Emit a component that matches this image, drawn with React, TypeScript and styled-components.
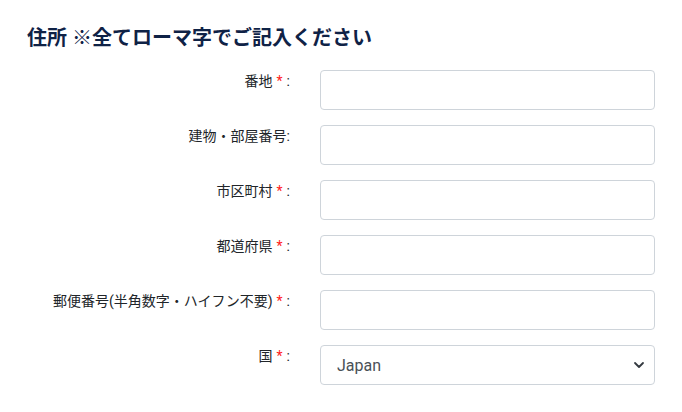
import React from "react";
import styled, {createGlobalStyle} from "styled-components";

const GlobalStyle = createGlobalStyle`
  html, body {
    margin: 0;
    padding: 0;
    background: #ffffff;
  }
  body {
    font-family: Roboto, "Noto Sans CJK JP", sans-serif;
    color: #212529;
  }
`;

const S = {
    Page: styled.div`
      width: 682px;
      height: 412px;
      box-sizing: border-box;
      padding: 23px 27px 0 27px;
      overflow: hidden;
    `,
    Heading: styled.h2`
      margin: 0 0 17px 0;
      font-family: Roboto, "Noto Sans CJK JP", sans-serif;
      font-size: 20px;
      line-height: 30px;
      font-weight: 700;
      color: #0f2246;
    `,
    Form: styled.div`
      display: grid;
      grid-template-columns: 263px 335px;
      column-gap: 30px;
      row-gap: 15px;
    `,
    Label: styled.label`
      display: block;
      text-align: right;
      padding-top: 1px;
      font-family: Roboto, "Noto Sans CJK JP", sans-serif;
      font-size: 14px;
      line-height: 21px;
      color: #212529;
      white-space: nowrap;
    `,
    Required: styled.span`
      color: #ff2020;
      margin: 0 4px 0 4px;
    `,
    Input: styled.input`
      display: block;
      width: 100%;
      height: 40px;
      box-sizing: border-box;
      margin: 0;
      padding: 6px 16px;
      border: 1px solid #ced4da;
      border-radius: 4px;
      background: #fff;
      font-family: Roboto, sans-serif;
      font-size: 16px;
      color: #495057;
      outline: none;
    `,
    SelectWrap: styled.div`
      position: relative;
      width: 100%;
      height: 40px;
    `,
    Select: styled.select`
      display: block;
      width: 100%;
      height: 40px;
      box-sizing: border-box;
      margin: 0;
      padding: 0 32px 0 16px;
      border: 1px solid #ced4da;
      border-radius: 4px;
      background: #fff;
      font-family: Roboto, sans-serif;
      font-size: 16px;
      color: #495057;
      appearance: none;
      -webkit-appearance: none;
      outline: none;
    `,
    Chevron: styled.svg`
      position: absolute;
      right: 10px;
      top: 14px;
      pointer-events: none;
    `,
}

interface FieldProps {
    label: string;
    required?: boolean;
}

const Field: React.FC<FieldProps> = ({label, required}) => (
    <>
        <S.Label>
            {label}
            {required ? <><S.Required>*</S.Required>:</> : ":"}
        </S.Label>
        <S.Input type="text"/>
    </>
)

const App: React.FC = () => {
    return (
        <S.Page>
            <GlobalStyle/>
            <S.Heading>住所 ※全てローマ字でご記入ください</S.Heading>
            <S.Form>
                <Field label="番地" required/>
                <Field label="建物・部屋番号"/>
                <Field label="市区町村" required/>
                <Field label="都道府県" required/>
                <Field label="郵便番号(半角数字・ハイフン不要)" required/>
                <S.Label>
                    国<S.Required>*</S.Required>:
                </S.Label>
                <S.SelectWrap>
                    <S.Select defaultValue="JP">
                        <option value="JP">Japan</option>
                    </S.Select>
                    <S.Chevron width="12" height="12" viewBox="0 0 12 12">
                        <path d="M2 4l4 4 4-4" fill="none" stroke="#343a40" strokeWidth="1.8"
                              strokeLinecap="round" strokeLinejoin="round"/>
                    </S.Chevron>
                </S.SelectWrap>
            </S.Form>
        </S.Page>
    )
}

export default App
